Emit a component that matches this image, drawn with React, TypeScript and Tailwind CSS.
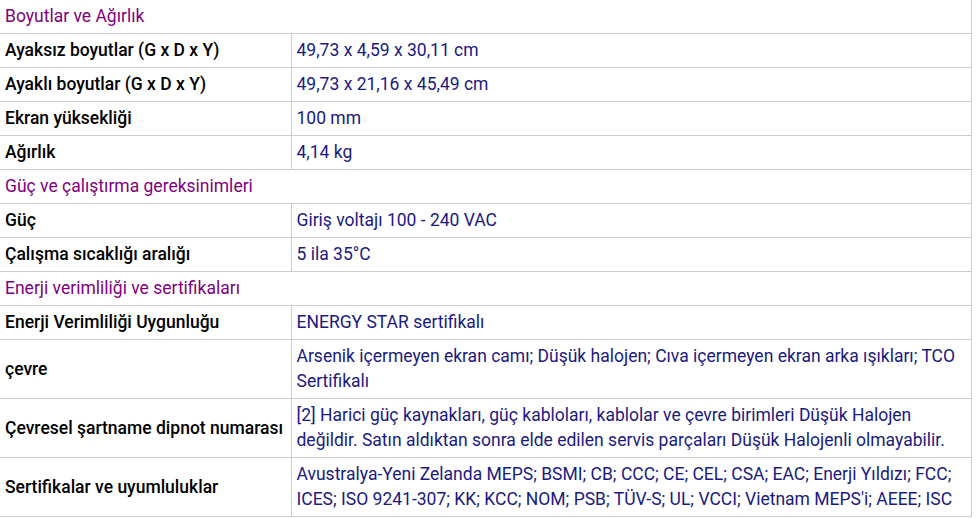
type Row = { kind: "section"; title: string } | { kind: "row"; label: string; value: string };

const rows: Row[] = [
  { kind: "section", title: "Boyutlar ve Ağırlık" },
  { kind: "row", label: "Ayaksız boyutlar (G x D x Y)", value: "49,73 x 4,59 x 30,11 cm" },
  { kind: "row", label: "Ayaklı boyutlar (G x D x Y)", value: "49,73 x 21,16 x 45,49 cm" },
  { kind: "row", label: "Ekran yüksekliği", value: "100 mm" },
  { kind: "row", label: "Ağırlık", value: "4,14 kg" },
  { kind: "section", title: "Güç ve çalıştırma gereksinimleri" },
  { kind: "row", label: "Güç", value: "Giriş voltajı 100 - 240 VAC" },
  { kind: "row", label: "Çalışma sıcaklığı aralığı", value: "5 ila 35°C" },
  { kind: "section", title: "Enerji verimliliği ve sertifikaları" },
  { kind: "row", label: "Enerji Verimliliği Uygunluğu", value: "ENERGY STAR sertifikalı" },
  {
    kind: "row",
    label: "çevre",
    value: "Arsenik içermeyen ekran camı; Düşük halojen; Cıva içermeyen ekran arka ışıkları; TCO Sertifikalı",
  },
  {
    kind: "row",
    label: "Çevresel şartname dipnot numarası",
    value:
      "[2] Harici güç kaynakları, güç kabloları, kablolar ve çevre birimleri Düşük Halojen değildir. Satın aldıktan sonra elde edilen servis parçaları Düşük Halojenli olmayabilir.",
  },
  {
    kind: "row",
    label: "Sertifikalar ve uyumluluklar",
    value:
      "Avustralya-Yeni Zelanda MEPS; BSMI; CB; CCC; CE; CEL; CSA; EAC; Enerji Yıldızı; FCC; ICES; ISO 9241-307; KK; KCC; NOM; PSB; TÜV-S; UL; VCCI; Vietnam MEPS'i; AEEE; ISC",
  },
];

export default function App() {
  return (
    <div className="w-[977px] h-[518px] overflow-hidden bg-white font-['Roboto',sans-serif] text-[17.5px] leading-[25px]">
      <table className="w-[972px] -mt-px border-collapse table-fixed border-r border-[#cccccc]">
        <colgroup>
          <col className="w-[291px]" />
          <col />
        </colgroup>
        <tbody>
          {rows.map((r, i) =>
            r.kind === "section" ? (
              <tr key={i}>
                <td colSpan={2} className="border-y border-[#cccccc] px-[5px] py-[4px] text-[#800080]">
                  {r.title}
                </td>
              </tr>
            ) : (
              <tr key={i}>
                <td className="border-y border-[#cccccc] px-[5px] py-[4px] align-middle font-medium text-black">
                  {r.label}
                </td>
                <td className="border border-[#cccccc] px-[5px] py-[4px] align-middle text-[#1a1a80]">
                  {r.value}
                </td>
              </tr>
            )
          )}
        </tbody>
      </table>
    </div>
  );
}
